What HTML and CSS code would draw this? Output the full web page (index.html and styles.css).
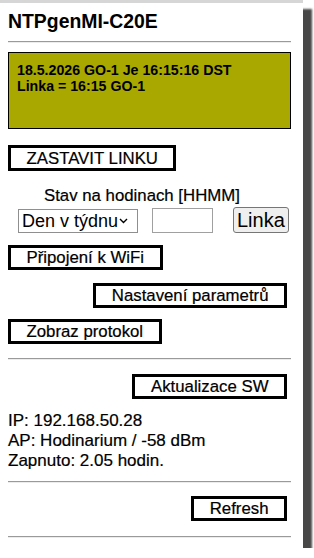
FILE: index.html
```html
<!DOCTYPE html>
<html lang="cs">
<head>
  <meta charset="UTF-8">
  <meta name="viewport" content="width=device-width, initial-scale=1.0">
  <title>NTPgenMI-C20E</title>
  <link rel="stylesheet" href="styles.css">
</head>
<body>
  <div class="panel">
    <h1 class="title">NTPgenMI-C20E</h1>
    <hr class="sep first">
    <div class="display">
      <div>18.5.2026 GO-1 Je 16:15:16 DST</div>
      <div>Linka = 16:15 GO-1</div>
    </div>
    <div class="line stop-line">
      <button class="btn">ZASTAVIT LINKU</button>
    </div>
    <div class="stav">Stav na hodinach [HHMM]</div>
    <div class="set-row">
      <div class="select-wrap">
        <select class="day">
          <option>Den v týdnu</option>
        </select>
        <svg class="chev" width="9" height="6" viewBox="0 0 9 6"><path d="M1 1l3.5 3.5L8 1" fill="none" stroke="#000" stroke-width="1.4"/></svg>
      </div>
      <input class="hhmm" type="text">
      <button class="linka">Linka</button>
    </div>
    <div class="line wifi-line">
      <button class="btn">Připojení k WiFi</button>
    </div>
    <div class="line right params-line">
      <button class="btn">Nastavení parametrů</button>
    </div>
    <div class="line proto-line">
      <button class="btn">Zobraz protokol</button>
    </div>
    <hr class="sep mid">
    <div class="line right sw-line">
      <button class="btn">Aktualizace SW</button>
    </div>
    <div class="info">
      <div>IP: 192.168.50.28</div>
      <div>AP: Hodinarium / -58 dBm</div>
      <div>Zapnuto: 2.05 hodin.</div>
    </div>
    <hr class="sep after-info">
    <div class="line right refresh-line">
      <button class="btn">Refresh</button>
    </div>
    <hr class="sep last">
  </div>
</body>
</html>
```

FILE: styles.css
```css
html, body {
  margin: 0;
  padding: 0;
  background: #fff;
  font-family: "Liberation Sans", Arial, sans-serif;
  color: #000;
}
.panel {
  box-sizing: border-box;
  width: 303px;
  height: 548px;
  border-top: 3px solid #d6d6d6;
  padding: 7px 12px 0 8px;
  background: #fff;
  box-shadow: 9px 9px 2px #474747;
}
.title {
  margin: 0;
  font-size: 19.4px;
  line-height: 22px;
  font-weight: bold;
}
.sep {
  margin: 0;
  border: 0;
  border-top: 1px solid #9a9a9a;
  border-bottom: 1px solid #ececec;
  height: 0;
}
.sep.first { margin-top: 9px; }
.sep.mid { margin-top: 14px; }
.sep.after-info { margin-top: 10px; }
.sep.last { margin-top: 15px; }
.display {
  box-sizing: border-box;
  margin-top: 9px;
  height: 77px;
  border: 1px solid #000;
  background: #a9a800;
  padding: 9px 8px;
  font-size: 14.2px;
  line-height: 16px;
  font-weight: bold;
}
.line {
  display: flex;
}
.line.right {
  justify-content: flex-end;
  padding-right: 4px;
}
.btn {
  box-sizing: border-box;
  height: 25px;
  border: 3px solid #000;
  background: #fff;
  padding: 0 15.5px;
  font-family: "Liberation Sans", Arial, sans-serif;
  font-size: 16.8px;
  line-height: 19px;
  color: #000;
  border-radius: 0;
  -webkit-text-stroke: 0.2px #000;
}
.stop-line { margin-top: 16px; }
.stop-line .btn { height: 26px; }
.stav {
  margin-top: 15px;
  padding-left: 36px;
  font-size: 16.8px;
  line-height: 20px;
  -webkit-text-stroke: 0.2px #000;
}
.set-row {
  display: flex;
  align-items: center;
  height: 26px;
  margin-top: 1px;
  padding-left: 10px;
}
.select-wrap {
  position: relative;
  margin-right: 14px;
}
.day {
  -webkit-appearance: none;
  appearance: none;
  box-sizing: border-box;
  width: 120px;
  height: 24px;
  margin: 2px 0 0;
  border: 1px solid #8f8f8f;
  border-radius: 0;
  background: #fff;
  padding: 0 0 0 3px;
  font-family: "Liberation Sans", Arial, sans-serif;
  font-size: 18px;
  color: #000;
}
.chev {
  position: absolute;
  left: 101px;
  top: 11px;
}
.hhmm {
  box-sizing: border-box;
  width: 61px;
  height: 25px;
  margin: 0 20px 0 0;
  border: 1px solid #a0a0a0;
  border-radius: 0;
  padding: 0;
}
.linka {
  box-sizing: border-box;
  height: 26px;
  border: 1px solid #767676;
  border-radius: 3px;
  background: #efefef;
  padding: 0 3px;
  font-family: "Liberation Sans", Arial, sans-serif;
  font-size: 20px;
  line-height: 22px;
  color: #000;
}
.wifi-line { margin-top: 12px; }
.params-line { margin-top: 13px; }
.proto-line { margin-top: 11px; }
.sw-line { margin-top: 14px; }
.info {
  margin-top: 12px;
  font-size: 17px;
  line-height: 20px;
  -webkit-text-stroke: 0.2px #000;
}
.refresh-line { margin-top: 13px; }
```
